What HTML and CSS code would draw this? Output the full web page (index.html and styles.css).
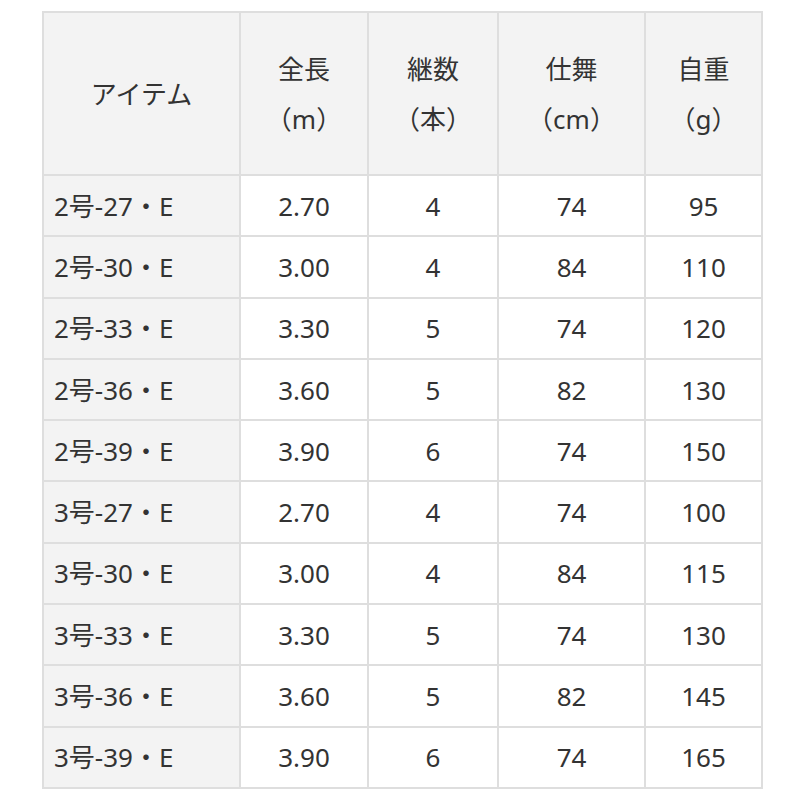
FILE: index.html
```html
<!DOCTYPE html>
<html lang="ja">
<head>
<meta charset="utf-8">
<link rel="stylesheet" href="styles.css">
</head>
<body>
<table class="spec">
  <colgroup>
    <col class="c1"><col class="c2"><col class="c3"><col class="c4"><col class="c5">
  </colgroup>
  <thead>
    <tr>
      <th>アイテム</th>
      <th>全長<br>（m）</th>
      <th>継数<br>（本）</th>
      <th>仕舞<br>（cm）</th>
      <th>自重<br>（g）</th>
    </tr>
  </thead>
  <tbody>
    <tr><th>2号-27・E</th><td>2.70</td><td>4</td><td>74</td><td>95</td></tr>
    <tr><th>2号-30・E</th><td>3.00</td><td>4</td><td>84</td><td>110</td></tr>
    <tr><th>2号-33・E</th><td>3.30</td><td>5</td><td>74</td><td>120</td></tr>
    <tr><th>2号-36・E</th><td>3.60</td><td>5</td><td>82</td><td>130</td></tr>
    <tr><th>2号-39・E</th><td>3.90</td><td>6</td><td>74</td><td>150</td></tr>
    <tr><th>3号-27・E</th><td>2.70</td><td>4</td><td>74</td><td>100</td></tr>
    <tr><th>3号-30・E</th><td>3.00</td><td>4</td><td>84</td><td>115</td></tr>
    <tr><th>3号-33・E</th><td>3.30</td><td>5</td><td>74</td><td>130</td></tr>
    <tr><th>3号-36・E</th><td>3.60</td><td>5</td><td>82</td><td>145</td></tr>
    <tr><th>3号-39・E</th><td>3.90</td><td>6</td><td>74</td><td>165</td></tr>
  </tbody>
</table>
</body>
</html>
```

FILE: styles.css
```css
html, body {
  margin: 0;
  padding: 0;
  background: #ffffff;
}
body {
  padding: 11px 0 0 42px;
  font-family: "Noto Sans", "Noto Sans CJK JP", sans-serif;
  color: #333333;
  font-size: 26px;
}
.spec {
  border-collapse: separate;
  border-spacing: 0;
  table-layout: fixed;
  width: 721px;
  border-top: 2px solid #dedede;
  border-left: 2px solid #dedede;
}
.c1 { width: 197px; }
.c2 { width: 128px; }
.c3 { width: 130px; }
.c4 { width: 147px; }
.c5 { width: 117px; }
.spec th, .spec td {
  border-right: 2px solid #dedede;
  border-bottom: 2px solid #dedede;
  padding: 0;
  font-weight: normal;
  text-align: center;
  vertical-align: middle;
  box-sizing: border-box;
}
.spec thead th {
  background: #f3f3f3;
  height: 163px;
  line-height: 50px;
}
.spec tbody th, .spec tbody td {
  height: 61.3px;
  line-height: 30px;
}
.spec tbody th {
  background: #f3f3f3;
  text-align: left;
  padding-left: 10px;
}
.spec tbody td {
  background: #ffffff;
}
```
